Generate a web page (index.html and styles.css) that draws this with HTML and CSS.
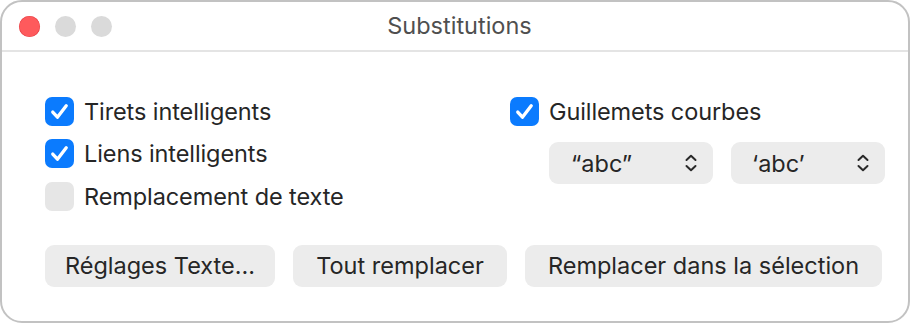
FILE: index.html
```html
<!DOCTYPE html>
<html lang="fr">
<head>
<meta charset="utf-8">
<title>Substitutions</title>
<link rel="stylesheet" href="styles.css">
</head>
<body>
<div class="window">
  <header class="titlebar">
    <div class="lights">
      <span class="light red"></span>
      <span class="light"></span>
      <span class="light"></span>
    </div>
    <div class="title">Substitutions</div>
    <div></div>
  </header>
  <main class="content">
    <div class="options">
      <div class="col left">
        <label class="row">
          <span class="box checked"><svg viewBox="0 0 28 28" width="28" height="28"><path d="M7.5 14.5 L12 19.5 L20.5 8.5" fill="none" stroke="#fff" stroke-width="3.2" stroke-linecap="round" stroke-linejoin="round"/></svg></span>
          <span class="label">Tirets intelligents</span>
        </label>
        <label class="row">
          <span class="box checked"><svg viewBox="0 0 28 28" width="28" height="28"><path d="M7.5 14.5 L12 19.5 L20.5 8.5" fill="none" stroke="#fff" stroke-width="3.2" stroke-linecap="round" stroke-linejoin="round"/></svg></span>
          <span class="label">Liens intelligents</span>
        </label>
        <label class="row">
          <span class="box"></span>
          <span class="label">Remplacement de texte</span>
        </label>
      </div>
      <div class="col right">
        <label class="row">
          <span class="box checked"><svg viewBox="0 0 28 28" width="28" height="28"><path d="M7.5 14.5 L12 19.5 L20.5 8.5" fill="none" stroke="#fff" stroke-width="3.2" stroke-linecap="round" stroke-linejoin="round"/></svg></span>
          <span class="label">Guillemets courbes</span>
        </label>
        <div class="selects">
          <div class="select wide">
            <span>“abc”</span>
            <svg class="chev" viewBox="0 0 14 18" width="14" height="18"><path d="M2.5 6 L7 1.8 L11.5 6 M2.5 12 L7 16.2 L11.5 12" fill="none" stroke="#2a2a2a" stroke-width="2" stroke-linecap="round" stroke-linejoin="round"/></svg>
          </div>
          <div class="select narrow">
            <span>‘abc’</span>
            <svg class="chev" viewBox="0 0 14 18" width="14" height="18"><path d="M2.5 6 L7 1.8 L11.5 6 M2.5 12 L7 16.2 L11.5 12" fill="none" stroke="#2a2a2a" stroke-width="2" stroke-linecap="round" stroke-linejoin="round"/></svg>
          </div>
        </div>
      </div>
    </div>
    <div class="buttons">
      <button class="btn b1">Réglages Texte...</button>
      <button class="btn b2">Tout remplacer</button>
      <button class="btn b3">Remplacer dans la sélection</button>
    </div>
  </main>
</div>
</body>
</html>
```

FILE: styles.css
```css
* { box-sizing: border-box; }
html, body { margin: 0; padding: 0; background: #ffffff; }
body {
  font-family: Inter, "Noto Sans", "Liberation Sans", sans-serif;
  color: #262626;
}
.window {
  width: 910px;
  height: 323px;
  border: 2px solid #c2c2c2;
  border-radius: 22px;
  background: #ffffff;
  overflow: hidden;
}
.titlebar {
  height: 50px;
  border-bottom: 2px solid #e4e4e4;
  display: grid;
  grid-template-columns: 1fr auto 1fr;
  align-items: center;
  padding-left: 17px;
}
.lights { display: flex; gap: 15px; }
.light {
  width: 21px;
  height: 21px;
  border-radius: 50%;
  background: #dadada;
}
.light.red { background: #fe5a5c; box-shadow: inset 0 0 0 0.6px #e6454a; }
.title {
  font-size: 23.5px;
  color: #4f4f4f;
  padding-right: 8px;
  padding-bottom: 2px;
}
.content { padding: 38px 0 0 43px; }
.options { display: flex; }
.col.left { width: 465px; }
.row {
  height: 42.5px;
  display: flex;
  align-items: center;
  gap: 10px;
}
.box {
  width: 29px;
  height: 29px;
  border-radius: 7px;
  background: #e6e6e6;
  display: flex;
  flex: none;
}
.box.checked { background: #0b7bfe; }
.box svg { width: 29px; height: 29px; }
.label { font-size: 23.5px; letter-spacing: -0.1px; }
.selects {
  display: flex;
  gap: 18px;
  margin-top: 9.5px;
  margin-left: 39px;
}
.select {
  height: 42px;
  border-radius: 9px;
  background: #ececec;
  display: flex;
  align-items: center;
  justify-content: space-between;
  font-size: 23.5px;
  padding: 0 15px 0 22px;
}
.select.wide { width: 164px; }
.select.narrow { width: 154px; padding-left: 21px; }
.chev { display: block; }
.buttons {
  display: flex;
  gap: 18px;
  margin-top: 27.5px;
}
.btn {
  height: 42px;
  border: none;
  border-radius: 9px;
  background: #ececec;
  font-family: inherit;
  font-size: 23.5px;
  color: #262626;
  padding: 0 0 1px;
  text-align: center;
}
.b1 { width: 230px; }
.b2 { width: 214px; }
.b3 { width: 357px; }
```
